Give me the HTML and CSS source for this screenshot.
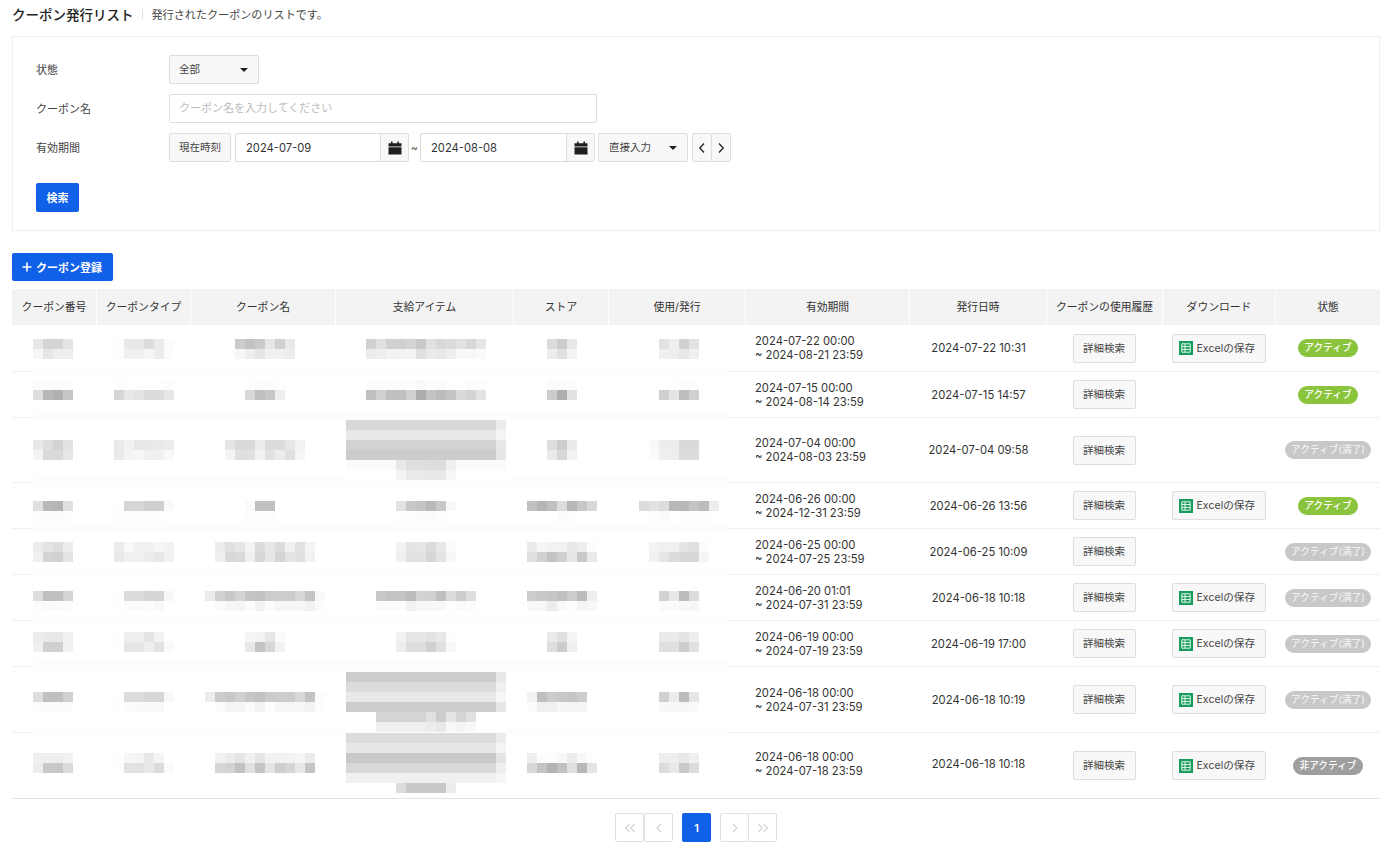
FILE: index.html
```html
<!DOCTYPE html>
<html lang="ja">
<head>
  <meta charset="UTF-8" />
  <title>クーポン発行リスト</title>
  <link rel="stylesheet" href="styles.css">
</head>
<body>
  <div class="page-head">
    <h1>クーポン発行リスト</h1>
    <p>発行されたクーポンのリストです。</p>
  </div>

  <form class="filter">
    <div class="filter-row">
      <label>状態</label>
      <div class="select select-state">全部<span class="caret"></span></div>
    </div>
    <div class="filter-row">
      <label>クーポン名</label>
      <input class="text-input" type="text" placeholder="クーポン名を入力してください">
    </div>
    <div class="filter-row">
      <label>有効期間</label>
      <button class="btn btn-now" type="button">現在時刻</button>
      <div class="date">
        <span class="date-value">2024-07-09</span>
        <span class="date-icon">
          <svg width="14" height="14" viewBox="0 0 14 14"><path d="M3 0.5h1.6v1.8h4.8V0.5H11v1.8h2.5v3.2H0.5V2.3H3zM0.5 6.2h13v7.3H0.5z" fill="#1f1f1f"/></svg>
        </span>
      </div>
      <span class="tilde">~</span>
      <div class="date date-end">
        <span class="date-value">2024-08-08</span>
        <span class="date-icon">
          <svg width="14" height="14" viewBox="0 0 14 14"><path d="M3 0.5h1.6v1.8h4.8V0.5H11v1.8h2.5v3.2H0.5V2.3H3zM0.5 6.2h13v7.3H0.5z" fill="#1f1f1f"/></svg>
        </span>
      </div>
      <div class="select select-range">直接入力<span class="caret"></span></div>
      <div class="stepper">
        <button type="button"><svg width="8" height="12" viewBox="0 0 8 12"><path d="M6 1.5L1.8 6 6 10.5" fill="none" stroke="#222" stroke-width="1.3"/></svg></button>
        <button type="button"><svg width="8" height="12" viewBox="0 0 8 12"><path d="M2 1.5L6.2 6 2 10.5" fill="none" stroke="#222" stroke-width="1.3"/></svg></button>
      </div>
    </div>
    <button class="btn-primary btn-search" type="button">検索</button>
  </form>

  <button class="btn-primary btn-add" type="button">
    <svg width="10" height="10" viewBox="0 0 10 10"><path d="M5 0.5v9M0.5 5h9" stroke="#fff" stroke-width="1.6"/></svg>
    クーポン登録
  </button>

  <table class="list">
    <colgroup>
      <col style="width:85px"><col style="width:94px"><col style="width:145px"><col style="width:178px">
      <col style="width:95px"><col style="width:137px"><col style="width:164px"><col style="width:137px">
      <col style="width:116px"><col style="width:113px"><col style="width:104px">
    </colgroup>
    <thead>
      <tr>
        <th>クーポン番号</th>
        <th>クーポンタイプ</th>
        <th>クーポン名</th>
        <th>支給アイテム</th>
        <th>ストア</th>
        <th>使用/発行</th>
        <th>有効期間</th>
        <th>発行日時</th>
        <th>クーポンの使用履歴</th>
        <th>ダウンロード</th>
        <th>状態</th>
      </tr>
    </thead>
    <tbody id="rows"></tbody>
  </table>

  <div class="pager">
    <div class="pager-group pager-group-first">
      <button type="button"><svg width="12" height="10" viewBox="0 0 12 10"><path d="M5.5 1L1.5 5l4 4M10.5 1l-4 4 4 4" fill="none" stroke="#d4d4d4" stroke-width="1.2"/></svg></button>
      <button type="button"><svg width="8" height="10" viewBox="0 0 8 10"><path d="M6 1L2 5l4 4" fill="none" stroke="#d4d4d4" stroke-width="1.2"/></svg></button>
    </div>
    <button class="pager-current" type="button">1</button>
    <div class="pager-group">
      <button type="button"><svg width="8" height="10" viewBox="0 0 8 10"><path d="M2 1l4 4-4 4" fill="none" stroke="#d4d4d4" stroke-width="1.2"/></svg></button>
      <button type="button"><svg width="12" height="10" viewBox="0 0 12 10"><path d="M1.5 1l4 4-4 4M6.5 1l4 4-4 4" fill="none" stroke="#d4d4d4" stroke-width="1.2"/></svg></button>
    </div>
  </div>

  <script src="script.js"></script>
</body>
</html>
```

FILE: styles.css
```css
* {
  margin: 0;
  padding: 0;
  box-sizing: border-box;
}

body {
  font-family: Inter, "Noto Sans CJK JP", sans-serif;
  font-size: 11px;
  color: #333;
  background: #fff;
  padding: 0 20px 0 12px;
  overflow: hidden;
}

button {
  font: inherit;
  cursor: pointer;
}

/* Title */
.page-head {
  display: flex;
  align-items: center;
  height: 36px;
  padding-bottom: 8px;
}

.page-head h1 {
  font-size: 13.5px;
  font-weight: 500;
  color: #222;
  padding-right: 9px;
  margin-right: 9px;
  position: relative;
}

.page-head h1::after {
  content: '';
  position: absolute;
  right: 0;
  top: 5px;
  width: 1px;
  height: 10px;
  background: #ddd;
}

.page-head p {
  font-size: 11.1px;
  color: #444;
  padding-bottom: 1px;
}

/* Search form */
.filter {
  border: 1px solid #eee;
  height: 195px;
  padding: 18px 23px;
  display: flex;
  flex-direction: column;
  gap: 10px;
}

.filter-row {
  display: flex;
  align-items: center;
  height: 29px;
}

.filter-row label {
  width: 133px;
  color: #444;
  padding-bottom: 2px;
}

.select {
  height: 29px;
  background: #f8f8f8;
  border: 1px solid #ddd;
  border-radius: 2px;
  display: flex;
  align-items: center;
  justify-content: space-between;
  padding: 0 10px 2px 9px;
  color: #444;
  font-size: 10.5px;
}

.select-state {
  width: 90px;
}

.select-range {
  width: 90px;
  margin-left: 3px;
  padding-left: 10px;
}

.caret {
  width: 0;
  height: 0;
  margin-top: 2px;
  border-left: 4px solid transparent;
  border-right: 4px solid transparent;
  border-top: 4px solid #222;
}

.text-input {
  width: 428px;
  height: 29px;
  border: 1px solid #ddd;
  border-radius: 2px;
  padding: 0 9px 1px;
  font: inherit;
  outline: none;
}

.text-input::placeholder {
  color: #bbb;
}

.btn {
  height: 29px;
  background: #f8f8f8;
  border: 1px solid #ddd;
  border-radius: 2px;
  color: #444;
  font-size: 10.5px;
  padding-bottom: 2px;
}

.btn-now {
  width: 62px;
  margin-right: 4px;
}

.date {
  display: flex;
  width: 174px;
  height: 29px;
  border: 1px solid #ddd;
  border-radius: 2px;
}

.date-end {
  width: 175px;
}

.date-value {
  flex: 1;
  display: flex;
  align-items: center;
  padding-left: 10px;
  font-size: 11.2px;
}

.date-icon {
  width: 28px;
  display: flex;
  align-items: center;
  justify-content: center;
  background: #f8f8f8;
  border-left: 1px solid #ddd;
}

.tilde {
  width: 11px;
  text-align: center;
  color: #555;
}

.stepper {
  display: flex;
  margin-left: 4px;
}

.stepper button {
  width: 20px;
  height: 29px;
  background: #f8f8f8;
  border: 1px solid #ddd;
  border-radius: 2px;
  display: flex;
  align-items: center;
  justify-content: center;
}

.stepper button + button {
  margin-left: -1px;
}

.btn-primary {
  background: #1160e8;
  border: 0;
  border-radius: 2px;
  color: #fff;
  font-weight: 600;
}

.btn-search {
  width: 43px;
  height: 29px;
  margin-top: 11px;
  padding-bottom: 2px;
}

.btn-add {
  display: flex;
  align-items: center;
  gap: 4px;
  width: 101px;
  height: 28px;
  margin: 22px 0 8px;
  padding: 0 0 1px 10px;
}

/* Table */
.list {
  width: 1368px;
  table-layout: fixed;
  border-collapse: separate;
  border-spacing: 0;
  border-bottom: 1px solid #e3e3e3;
}

.list th {
  height: 36px;
  background: #f3f3f3;
  border-right: 1px solid #fff;
  font-weight: 400;
  color: #333;
  font-size: 10.8px;
  padding-bottom: 2px;
}

.list th:last-child {
  border-right: 0;
}

.list td {
  border-bottom: 1px solid #f0f0f0;
  text-align: center;
  vertical-align: middle;
  font-size: 11.25px;
  color: #333;
}

.list tr:last-child td {
  border-bottom: 0;
}

.list td.cell-first {
  position: relative;
  padding-right: 4px;
}

.list td:nth-child(3),
.list td:nth-child(4),
.list td:nth-child(6) {
  padding-left: 2px;
}

.list td:nth-child(9),
.list td:nth-child(10) {
  padding-right: 2px;
}

/* the censor mosaic also paints over the row line */
.list td.cell-first::after {
  content: '';
  position: absolute;
  left: 21px;
  bottom: -4px;
  width: 695px;
  height: 9px;
  background: #fdfdfd;
  z-index: 1;
}

.list tr:last-child td.cell-first::after {
  display: none;
}

.list td.cell-period {
  text-align: left;
  padding-left: 9px;
  line-height: 14px;
}

.list tr:last-child td.cell-period,
.list tr:last-child td.cell-issued {
  padding-bottom: 3px;
}

.mosaic {
  display: inline-block;
  position: relative;
  z-index: 2;
  vertical-align: middle;
}

.mosaic-row {
  display: flex;
  height: 10px;
}

.mosaic-row span {
  width: 10px;
  height: 10px;
  flex: none;
}

.btn-detail {
  display: inline-block;
  width: 63px;
  vertical-align: middle;
}

.btn-excel {
  display: inline-flex;
  align-items: center;
  gap: 4px;
  width: 94px;
  padding: 0 0 0 6px;
  vertical-align: middle;
  font-size: 10.6px;
}

.btn-excel span {
  padding-bottom: 2px;
}

.badge {
  display: inline-block;
  height: 18px;
  line-height: 17px;
  border-radius: 9px;
  color: #fff;
  font-size: 9.7px;
  font-weight: 500;
  vertical-align: middle;
}

.badge-on {
  width: 60px;
  background: #8ac43c;
}

.badge-full {
  width: 86px;
  background: #c8c8c8;
  color: #f0f0f0;
}

.badge-off {
  width: 70px;
  background: #9e9e9e;
}

/* Pagination */
.pager {
  display: flex;
  justify-content: center;
  gap: 9px;
  padding-top: 14px;
}

.pager-group {
  display: flex;
}

.pager-group button {
  width: 29px;
  height: 29px;
  background: #fff;
  border: 1px solid #e0e0e0;
  border-radius: 2px;
  display: flex;
  align-items: center;
  justify-content: center;
}

.pager-group button + button {
  margin-left: -1px;
}

.pager-group-first button + button {
  margin-left: 0;
}

.pager-current {
  width: 29px;
  height: 29px;
  background: #1160e8;
  border: 0;
  border-radius: 2px;
  color: #fff;
  font-weight: 600;
}
```

FILE: script.js
```js
// Gray levels of the censored cells, "|" starts a new mosaic row, "d8x15" repeats
const rows = [
  { h: 47, shift: 0.5,
    cells: ['e8 d4 d4 e4|f6 e6 ee ee', 'fd e8 e8 dc ea fc|fd f0 f0 f6 ec fc', 'cc c2 ca e6 d0 e8|f6 ee e6 f0 f0 ec',
      'd0 e0 d0 d0 d4 c8 e0 d8 dc e2 d8 e6|ec ee f2 f2 f4 e0 ea e8 ee f8 f8 fa', 'dc cc e8|ec e0 f4', 'e2 ee d0 e2|f0 ee e8 f0'],
    period: ['2024-07-22 00:00', '2024-08-21 23:59'], issued: '2024-07-22 10:31', excel: true, state: 'on' },
  { h: 46, shift: -4.5,
    cells: ['fc fc fc fd|de b8 b0 c6', 'fd fe fe fe fe fc|d6 e8 e4 dc dc e6', 'fe fc fc fe|d8 c0 c8 ee',
      'fc fc fc fc fd f8 fc fc fe fe fc fc|c0 d0 c0 c0 d0 ac c4 bc c4 da d4 e4', 'fb fb fc|cc ae e2', 'fe fe fc fc|d0 e4 be d0'],
    period: ['2024-07-15 00:00', '2024-08-14 23:59'], issued: '2024-07-15 14:57', excel: false, state: 'on' },
  { h: 65, shift: 0,
    cells: ['e8 de d4 e2|f4 da da e6', 'ea f2 e8 e8 ea ec|ea f4 f6 f0 f0 f8', 'e6 da da ec dc dc e6 f2|f4 e0 e0 f2 e2 ec e0 f6',
      'd8x15 ec|e8x15 f4|d2x15 e8|ccx15 e6|fbx5 e8 de de dc dc f0 fbx5|ffx5 f4 ea ea e8 e8 f6 ffx5', 'dd cc ea|ea d8 f2', 'f8 ec ec da da ff|fa ee ee dc dc ff'],
    period: ['2024-07-04 00:00', '2024-08-03 23:59'], issued: '2024-07-04 09:58', excel: false, state: 'full' },
  { h: 46, shift: 5,
    cells: ['e0 b8 b4 e0|fc fb fb fe', 'fe d6 d6 d0 d0 f8|fe fe fe fe fe ff', 'fa c0 c0 ff|fd fd fd ff',
      'e2 c8 c4 b8 c8 f8|fe fe fc fa fe ff', 'c0 b4 c0 dc b8 c8 d8|ff ff ff fa fe ff ff', 'dc e2 dc b8 b8 c4 bc ec|ff fc fa ff fe fe fe ff'],
    period: ['2024-06-26 00:00', '2024-12-31 23:59'], issued: '2024-06-26 13:56', excel: true, state: 'on' },
  { h: 46, shift: 0,
    cells: ['ec e4 de ec|f0 d4 d0 e4', 'ec f8 f0 f0 f6 f2|e8 f0 f0 ec e8 f2', 'ec e0 e6 f4 dc e8 dc f0 e2 f4|ee d8 da f0 d8 e6 d4 e4 e0 f2',
      'f2 e4 e6 dc e8 fc|f0 e2 e2 d6 e4 f8', 'ea f6 f2 f2 e8 ee fb|e0 d2 c4 d0 e6 c8 ea', 'f4 f0 f0 e4 e0 fb|f2 e6 dc d8 d8 f6'],
    period: ['2024-06-25 00:00', '2024-07-25 23:59'], issued: '2024-06-25 10:09', excel: false, state: 'full' },
  { h: 46, shift: 3.5,
    cells: ['de c0 c0 d4|fc fb fb fc', 'fe dc dc d4 d6 f8|fe fb fa fc f8 ff', 'ec d0 c8 d4 c4 c2 cc cc cc d8 c4 f8|ff fb f6 f4 fc f2 fc f6 f6 f6 f2 fc',
      'c8 c4 c4 bc d2 d0 c0 dc cc de|fb fb fb f2 f8 f8 f8 fe fa fc', 'cc c8 c6 c0 cc bc ee|f8 f8 ec f8 fe f4 f8', 'd2 e8 bc dc|fa fa f8 f6'],
    period: ['2024-06-20 01:01', '2024-07-31 23:59'], issued: '2024-06-18 10:18', excel: true, state: 'full' },
  { h: 46, shift: -1.5,
    cells: ['ec e8 e8 f0|f0 d0 d0 f2', 'fe ee ee e4 f2 ff|fe e6 e6 ee e2 fa', 'f6 f2 e6 fa|e8 c4 d8 f2',
      'f2 e6 e6 e2 e8 fd|ee de de d0 e0 f8', 'ea e0 f4|de cc f0', 'ea ea e4 ee|e0 e0 cc e2'],
    period: ['2024-06-19 00:00', '2024-07-19 23:59'], issued: '2024-06-19 17:00', excel: true, state: 'full' },
  { h: 66, shift: 2.5,
    cells: ['de c0 c0 d0|fc fb fb fb', 'fe dc dc d6 d6 f8|fe fb fa fa f8 ff', 'ec cc c8 d0 c6 c2 cc cc cc d8 c4 fc|ff fb f4 f4 fb f2 fd f6 f6 f6 f2 fc',
      'ccx15 e8|dcx15 f0|e8x15 f6|ccx15 e6|ffx3 d4x5 e0 cc e4 d4 e0 ffx3|ffx3 f0x5 ec e8 f8 f4 f8 ffx3', 'f2 c0 cc c8 c6 cc ff|fb f0 f0 f6 f4 f6 ff', 'd0 ec bc e6|f8 f8 f6 fa'],
    period: ['2024-06-18 00:00', '2024-07-31 23:59'], issued: '2024-06-18 10:19', excel: true, state: 'full' },
  { h: 65, shift: -2.5,
    cells: ['f0 ee ee f2|ec c8 c8 dc', 'fe f6 f4 e8 f4 ff|fe e2 e2 e8 dc fa', 'f2 ec e4 f0 e4 f2 f2 f2 f6 ec|d6 d2 c2 e0 c4 e4 ce d6 e8 c4',
      'dcx15 ec|e6x15 f4|c8x15 e4|d8x15 ee|f0x15 f6|ffx5 dc c8 c8 c8 c8 ec ffx5', 'ee fc fc f8 ec f8 fe|d8 c4 b4 c2 e0 b8 e4', 'ee ee e8 f0|dc e8 c8 dc'],
    period: ['2024-06-18 00:00', '2024-07-18 23:59'], issued: '2024-06-18 10:18', excel: true, state: 'off' },
];

const badges = {
  on: ['badge-on', 'アクティブ'],
  full: ['badge-full', 'アクティブ(満了)'],
  off: ['badge-off', '非アクティブ'],
};

const excelIcon = '<svg width="14" height="14" viewBox="0 0 14 14"><rect width="14" height="14" fill="#169c5c"/><path d="M2.8 2.8h8.4v8.4H2.8zM2.8 5.6h8.4M2.8 8.4h8.4M6 2.8v8.4" fill="none" stroke="#e8f5ee" stroke-width="1"/></svg>';

function buildMosaic(data) {
  const mosaic = document.createElement('div');
  mosaic.className = 'mosaic';
  data.split('|').forEach(line => {
    const row = document.createElement('div');
    row.className = 'mosaic-row';
    line.split(' ').forEach(token => {
      const [level, count] = token.split('x');
      for (let i = 0; i < (count || 1); i++) {
        const px = document.createElement('span');
        px.style.background = '#' + level + level + level;
        row.appendChild(px);
      }
    });
    mosaic.appendChild(row);
  });
  return mosaic;
}

const tbody = document.getElementById('rows');

rows.forEach(data => {
  const tr = document.createElement('tr');

  data.cells.forEach((cell, i) => {
    const td = document.createElement('td');
    td.style.height = data.h + 'px';
    if (i === 0) td.className = 'cell-first';
    if (data.shift > 0) td.style.paddingTop = data.shift * 2 + 'px';
    if (data.shift < 0) td.style.paddingBottom = -data.shift * 2 + 'px';
    td.appendChild(buildMosaic(cell));
    tr.appendChild(td);
  });

  const [badgeClass, badgeText] = badges[data.state];
  tr.insertAdjacentHTML('beforeend', `
    <td class="cell-period">${data.period[0]}<br>~ ${data.period[1]}</td>
    <td class="cell-issued">${data.issued}</td>
    <td><button class="btn btn-detail" type="button">詳細検索</button></td>
    <td>${data.excel ? `<button class="btn btn-excel" type="button">${excelIcon}<span>Excelの保存</span></button>` : ''}</td>
    <td><span class="badge ${badgeClass}">${badgeText}</span></td>
  `);
  tbody.appendChild(tr);
});
```
